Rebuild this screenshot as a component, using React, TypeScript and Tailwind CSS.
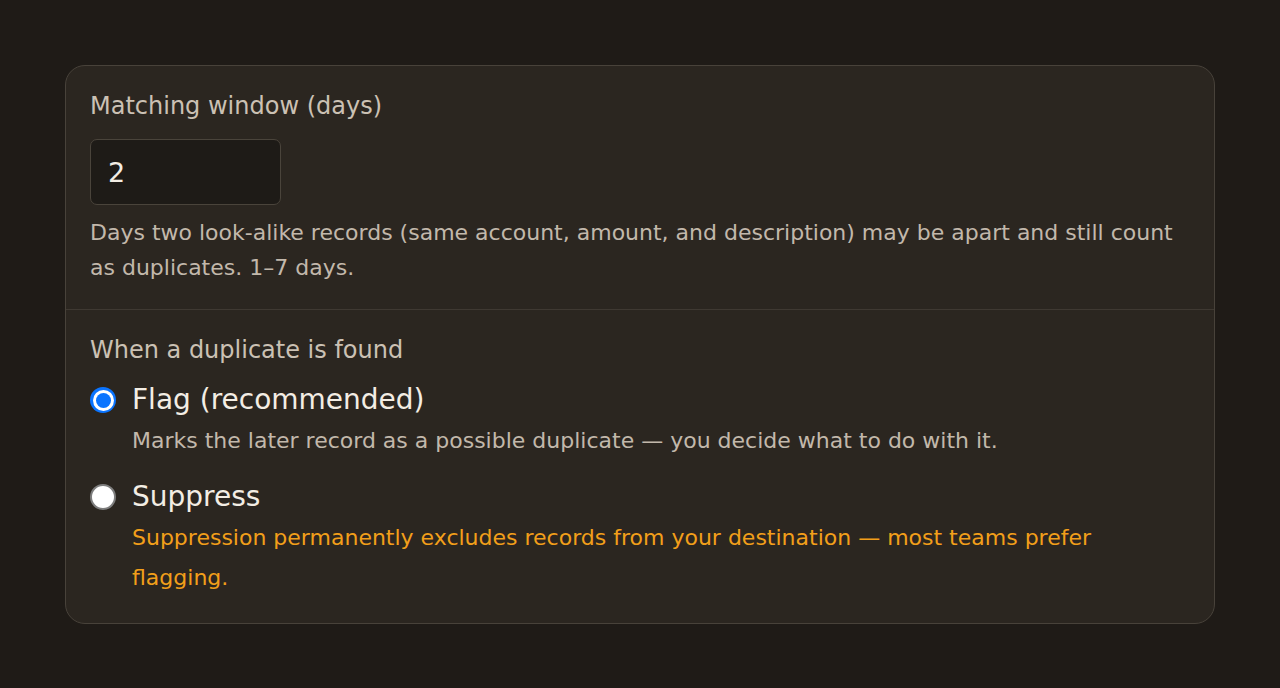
import React, { useState } from 'react';

type Choice = 'flag' | 'suppress';

const Radio: React.FC<{ checked: boolean }> = ({ checked }) =>
  checked ? (
    <span className="flex h-[26px] w-[26px] shrink-0 items-center justify-center rounded-full bg-[#0a74ff]">
      <span className="flex h-[21px] w-[21px] items-center justify-center rounded-full bg-white">
        <span className="h-[15px] w-[15px] rounded-full bg-[#0a74ff]" />
      </span>
    </span>
  ) : (
    <span className="h-[26px] w-[26px] shrink-0 rounded-full border-2 border-[#7d7d7d] bg-white" />
  );

export default function App() {
  const [days, setDays] = useState('2');
  const [mode, setMode] = useState<Choice>('flag');

  return (
    <div
      className="min-h-[688px] bg-[#1f1b17] px-[65px] pt-[65px]"
      style={{ fontFamily: '"DejaVu Sans", "Noto Sans", sans-serif' }}
    >
      <div className="rounded-[20px] border border-[#48423a] bg-[#2b2620]">
        <div className="border-b border-[#3f3932] px-6 pt-[25px] pb-6">
          <div className="text-[24px] leading-[30px] text-[#cbc1b4]">Matching window (days)</div>
          <input
            value={days}
            onChange={(e) => setDays(e.target.value)}
            className="mt-[18px] block h-[66px] w-[191px] rounded-[7px] border border-[#4a443b] bg-[#1e1b17] px-[17px] text-[27px] text-[#f3ede4] outline-none"
          />
          <p className="mt-[10px] text-[22px] leading-[35px] text-[#c2b8ab]">
            Days two look-alike records (same account, amount, and description) may be apart and still count as
            duplicates. 1–7 days.
          </p>
        </div>

        <div className="px-6 pt-[25px] pb-[25px]">
          <div className="text-[24px] leading-[30px] text-[#cbc1b4]">When a duplicate is found</div>

          <button onClick={() => setMode('flag')} className="mt-[14px] flex items-center gap-4 text-left">
            <Radio checked={mode === 'flag'} />
            <span className="text-[28px] leading-[42px] text-[#f3ede4]">Flag (recommended)</span>
          </button>
          <p className="mt-[2px] ml-[42px] text-[22px] leading-[35px] text-[#c2b8ab]">
            Marks the later record as a possible duplicate — you decide what to do with it.
          </p>

          <button onClick={() => setMode('suppress')} className="mt-[18px] flex items-center gap-4 text-left">
            <Radio checked={mode === 'suppress'} />
            <span className="text-[28px] leading-[42px] text-[#f3ede4]">Suppress</span>
          </button>
          <p className="ml-[42px] text-[22px] leading-[40px] text-[#f29f1a]">
            Suppression permanently excludes records from your destination — most teams prefer flagging.
          </p>
        </div>
      </div>
    </div>
  );
}
